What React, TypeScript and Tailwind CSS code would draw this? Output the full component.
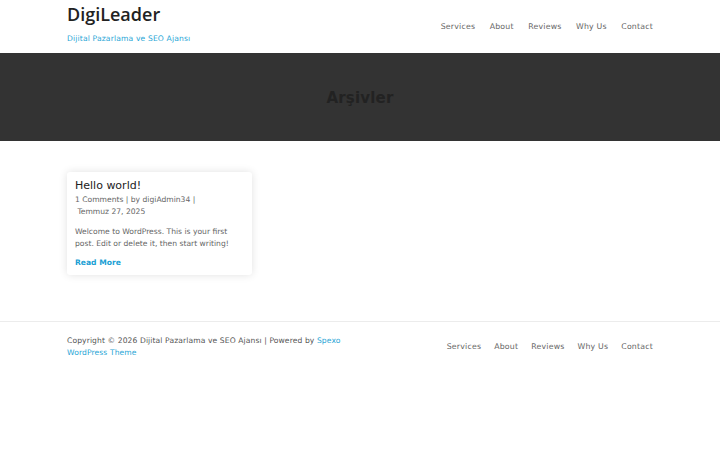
import React from "react";

const nav = ["Services", "About", "Reviews", "Why Us", "Contact"];

export default function App() {
  return (
    <div className="min-h-[450px] bg-white" style={{ fontFamily: '"DejaVu Sans", "Open Sans", sans-serif' }}>
      <header className="h-[53px]">
        <div className="mx-[67px] flex h-full items-start justify-between">
          <div className="pt-[3px]">
            <div
              className="text-[18px] font-semibold leading-[23px] text-[#222]"
              style={{ fontFamily: '"Open Sans", sans-serif' }}
            >
              DigiLeader
            </div>
            <div className="mt-[8px] text-[7.6px] leading-[10px] tracking-[0.15px] text-[#29a6d6]">Dijital Pazarlama ve SEO Ajansı</div>
          </div>
          <nav className="flex gap-[14.5px] pt-[21px] text-[7.8px] leading-[12px] tracking-[0.2px] text-[#666]">
            {nav.map((n) => (
              <span key={n}>{n}</span>
            ))}
          </nav>
        </div>
      </header>
      <section className="flex h-[88px] items-center justify-center bg-[#333333]">
        <h1 className="pt-[2px] text-[15px] font-bold tracking-[0.2px] text-[#222]">Arşivler</h1>
      </section>
      <main className="mx-[67px] pt-[31px] pb-[46px]">
        <article className="w-[185px] rounded-[3px] bg-white px-[8px] pt-[6px] pb-[6px] shadow-[0_0_8px_rgba(0,0,0,0.12)]">
          <h2 className="text-[11px] font-medium leading-[16px] text-[#222]">Hello world!</h2>
          <div className="text-[7.6px] leading-[12px] text-[#666]">
            1 Comments | by digiAdmin34 |<br />
            &nbsp;Temmuz 27, 2025
          </div>
          <p className="mt-[8px] text-[7.6px] leading-[12px] text-[#666]">
            Welcome to WordPress. This is your first post. Edit or delete it, then start writing!
          </p>
          <div className="mt-[7px] text-[7.6px] font-bold leading-[12px] text-[#1a9fd4]">Read More</div>
        </article>
      </main>
      <footer className="border-t border-[#ececec]">
        <div className="mx-[67px] flex items-start justify-between pt-[13px]">
          <div className="w-[290px] text-[7.6px] leading-[12px] tracking-[0.1px] text-[#555]">
            <div>
              Copyright © 2026 Dijital Pazarlama ve SEO Ajansı | Powered by <span className="text-[#29a6d6]">Spexo</span>
            </div>
            <div className="text-[#29a6d6]">WordPress Theme</div>
          </div>
          <nav className="flex gap-[13px] pt-[6px] text-[7.8px] leading-[12px] tracking-[0.2px] text-[#666]">
            {nav.map((n) => (
              <span key={n}>{n}</span>
            ))}
          </nav>
        </div>
      </footer>
    </div>
  );
}
